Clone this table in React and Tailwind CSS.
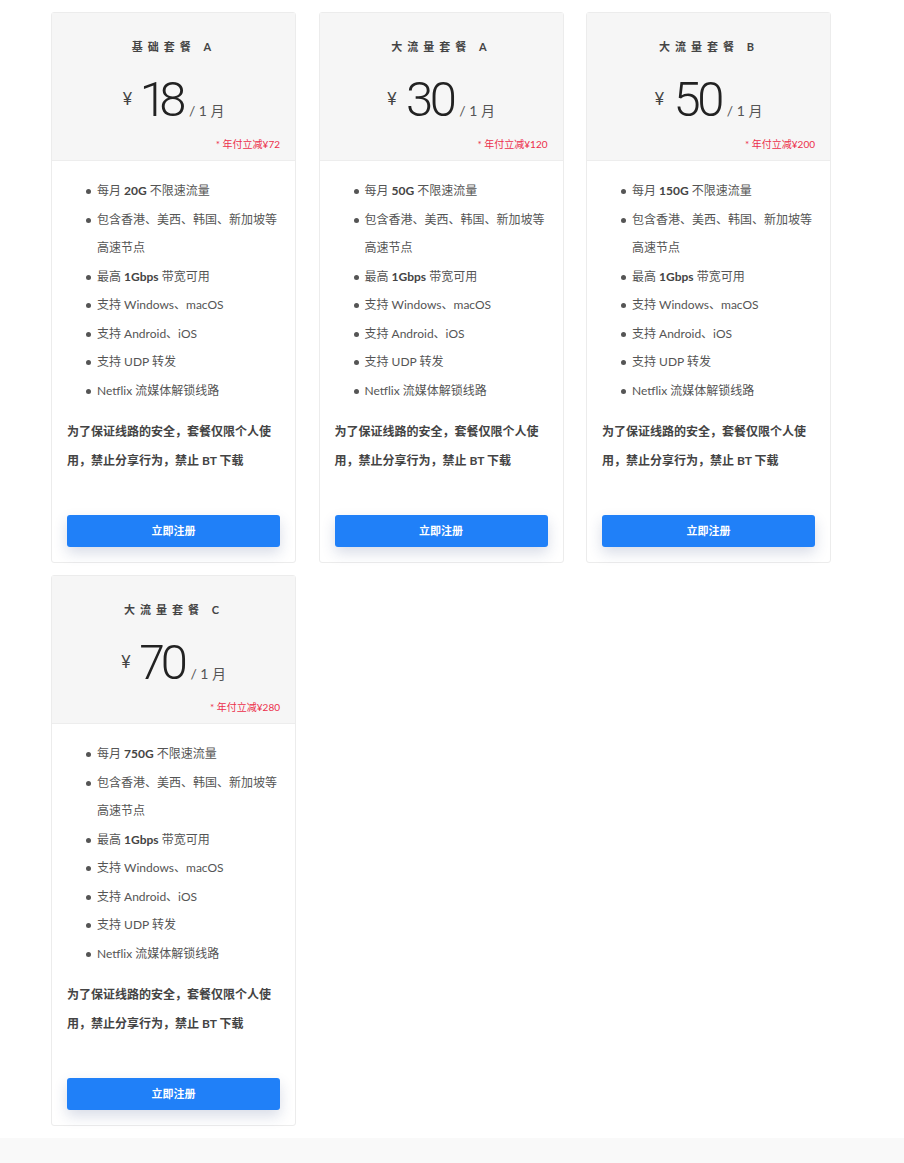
import React from "react";

const plans = [
  { title: "基础套餐", tag: "A", price: "18", save: "72", traffic: "20G" },
  { title: "大流量套餐", tag: "A", price: "30", save: "120", traffic: "50G" },
  { title: "大流量套餐", tag: "B", price: "50", save: "200", traffic: "150G" },
  { title: "大流量套餐", tag: "C", price: "70", save: "280", traffic: "750G" },
];

const li =
  "relative before:content-[''] before:absolute before:left-[-11px] before:top-[12px] before:w-[5px] before:h-[5px] before:rounded-full before:bg-[#555]";

function Card({ p }) {
  return (
    <div className="w-[245px] bg-white border border-[#ececec] rounded-[3px] flex flex-col">
      <div className="bg-[#f6f6f6] border-b border-[#ededed] h-[148px] flex flex-col pt-[24px] px-[15px]">
        <div className="text-center text-[11px] leading-[20px] font-bold text-[#444] tracking-[5px] pl-[1px]">
          {p.title}&nbsp;{p.tag}
        </div>
        <div className="flex items-baseline justify-center mt-[15px] h-[56px] text-[#333]">
          <span className="text-[17px] mr-[9px] self-start mt-[14px] font-['Lato','Noto_Sans_CJK_SC',sans-serif] text-[#444]">¥</span>
          <span className="text-[49px] leading-[56px] font-light font-['Roboto',sans-serif] text-[#222] tracking-[-4px] proportional-nums">{p.price}</span>
          <span className="text-[14px] ml-[6px] text-[#555]">/ 1 月</span>
        </div>
        <div className="text-right text-[10px] leading-[14px] text-[#ec2f4b] mt-[9px]">
          * 年付立减¥{p.save}
        </div>
      </div>
      <div className="px-[15px] pt-[16px] pb-[15px] flex flex-col">
        <ul className="list-none pl-[30px] text-[12px] leading-[28.5px] text-[#555]">
          <li className={li}>每月 <b className="text-[#444]">{p.traffic}</b> 不限速流量</li>
          <li className={li}>包含香港、美西、韩国、新加坡等高速节点</li>
          <li className={li}>最高 <b className="text-[#444]">1Gbps</b> 带宽可用</li>
          <li className={li}>支持 Windows、macOS</li>
          <li className={li}>支持 Android、iOS</li>
          <li className={li}>支持 UDP 转发</li>
          <li className={li}>Netflix 流媒体解锁线路</li>
        </ul>
        <p className="mt-[12px] text-[12px] leading-[29px] font-bold text-[#444]">
          为了保证线路的安全，套餐仅限个人使用，禁止分享行为，禁止 BT 下载
        </p>
        <button className="mt-[40px] h-[32px] w-full rounded-[3px] bg-[#2080f8] text-white text-[11px] font-bold shadow-[0_6px_14px_rgba(40,60,120,0.18)]">
          立即注册
        </button>
      </div>
    </div>
  );
}

export default function App() {
  return (
    <div className="min-h-[1163px] bg-white flex flex-col font-['Lato','Noto_Sans_CJK_SC',sans-serif]">
      <div className="pl-[51px] pt-[12px] pb-[12px] grid grid-cols-[245px_245px_245px] gap-x-[22.5px] gap-y-[12px] items-start">
        {plans.map((p, i) => (
          <Card key={i} p={p} />
        ))}
      </div>
      <div className="flex-1 bg-[#f9f9f9]"></div>
    </div>
  );
}
